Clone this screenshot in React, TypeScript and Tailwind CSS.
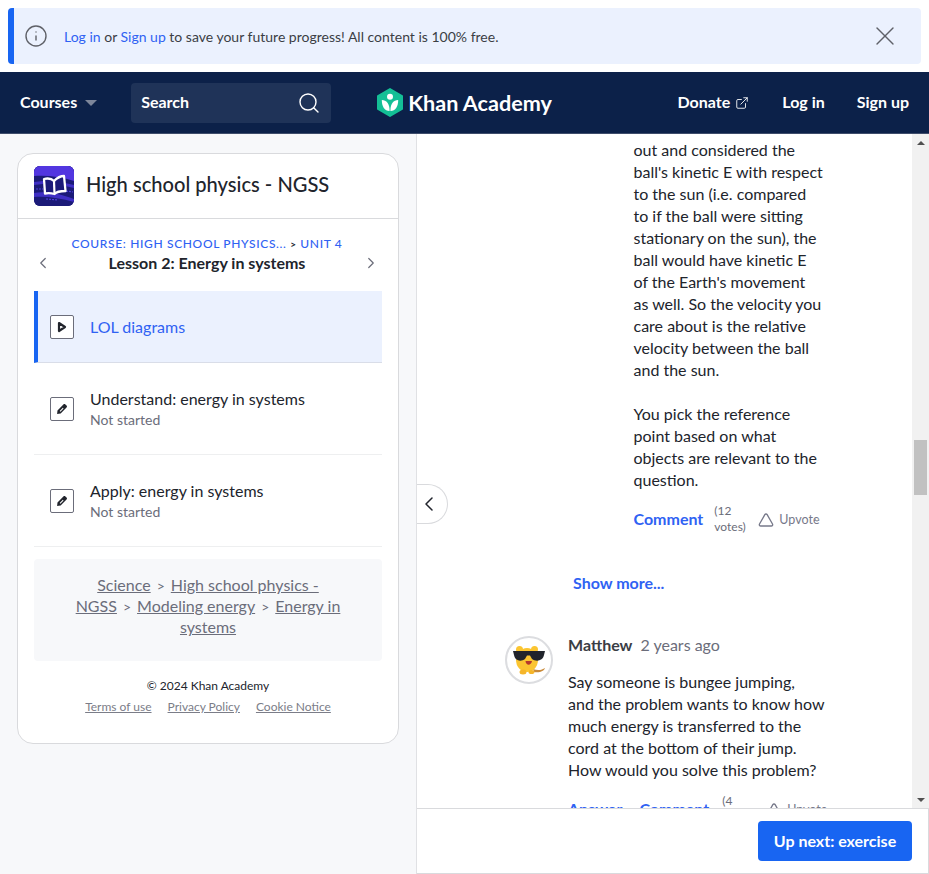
import React from 'react';
import { ChevronLeft, ChevronRight, Search, X, Info, ExternalLink, Triangle } from 'lucide-react';

const KhanLogo = () => (
  <svg width="26" height="29" viewBox="0 0 26 29">
    <path d="M13 1 L25 8 L25 21 L13 28 L1 21 L1 8 Z" fill="#14bf96" stroke="#14bf96" strokeLinejoin="round" strokeWidth="2" />
    <circle cx="13" cy="8.8" r="3" fill="#fff" />
    <path d="M4.8 12 C9.5 12 12.6 15.5 12.6 23 C7.5 23 4.8 18.5 4.8 12 Z" fill="#fff" />
    <path d="M21.2 12 C16.5 12 13.4 15.5 13.4 23 C18.5 23 21.2 18.5 21.2 12 Z" fill="#fff" />
  </svg>
);

const CourseIcon = () => (
  <div className="w-10 h-10 rounded-md bg-[#1b1a78] overflow-hidden shrink-0">
    <svg width="40" height="40" viewBox="0 0 40 40">
      <rect width="40" height="40" fill="#1b1a78" />
      <path d="M0 0 L40 0 L40 15 C28 11 14 9 0 10 Z" fill="#5236e0" />
      <path d="M0 16 L9 15 L9 18 L0 19 Z M31 17 L40 19 L40 22 L31 20 Z" fill="#3f2fc4" />
      <path d="M0 27 C12 25 26 28 40 33 L40 36 C26 32 12 30 0 31 Z" fill="#3f2fc4" />
      <path d="M2 23 L9 23 M32 25 L39 26 M12 33 L24 34" stroke="#4e3fdc" strokeWidth="1.2" strokeDasharray="2 1" />
      <path d="M10 13 C14 12 17 12 20 15 C23 12 26 10 30 10 L31.5 25 C27 25 23 25 20.5 28 C17 27 14 27 11 27.5 Z" fill="#1b1a78" stroke="#fff" strokeWidth="2.3" strokeLinejoin="round" />
      <path d="M20 15 L20.5 28" stroke="#fff" strokeWidth="2.2" />
    </svg>
  </div>
);

const PlayIcon = () => (
  <div className="w-6 h-6 rounded-[2px] border border-[#6b6d7a] flex items-center justify-center shrink-0 bg-white">
    <svg width="10" height="12" viewBox="0 0 10 12">
      <path d="M2 2 L8 6 L2 10 Z" fill="#fff" stroke="#21242c" strokeWidth="2.2" strokeLinejoin="round" />
    </svg>
  </div>
);

const PencilIcon = () => (
  <div className="w-6 h-6 rounded-[2px] border border-[#6b6d7a] flex items-center justify-center shrink-0 bg-white">
    <svg width="12" height="12" viewBox="0 0 13 13">
      <path d="M1.2 12 L1.6 8.2 L8 1.6 C8.7 0.9 9.5 0.9 10.2 1.6 L11.4 2.8 C12.1 3.5 12.1 4.3 11.4 5 L5 11.4 Z" fill="#21242c" />
      <path d="M4 8.6 L7.4 5.2 L8.2 6 L4.8 9.4 Z" fill="#fff" />
    </svg>
  </div>
);

const Avatar = () => (
  <div className="w-12 h-12 rounded-full border-2 border-[#dcdde0] bg-white flex items-center justify-center shrink-0">
    <svg width="34" height="30" viewBox="0 0 34 30">
      <path d="M21 24 C26 26 30 25 33 23 C32 26 28 28 22 27 Z" fill="#c98a3a" />
      <circle cx="7.5" cy="4.5" r="3.5" fill="#fbc531" />
      <circle cx="22.5" cy="4.5" r="3.5" fill="#fbc531" />
      <ellipse cx="15" cy="15" rx="11" ry="12" fill="#fbc531" />
      <ellipse cx="11" cy="27" rx="3.5" ry="2.5" fill="#f5b52a" />
      <ellipse cx="19.5" cy="27" rx="3" ry="2" fill="#f5b52a" />
      <path d="M1 6 L33 6 L32 10 C31 16 24 17 20 14 L18 10.5 L15 10.5 L13 14 C9 17 3 16 2 10 Z" fill="#21242c" />
      <path d="M13.5 16 C14 21 19 21 20 16 Z" fill="#b5392c" />
    </svg>
  </div>
);

const Topic = ({ icon, title, active, sub }: { icon: React.ReactNode; title: string; active?: boolean; sub?: string }) => (
  <div
    className={
      active
        ? 'h-[72px] flex items-center bg-[#ebf1fe] border-l-4 border-l-[#1865f2] pl-3 border-b border-b-[#d9dde8]'
        : 'h-[92px] flex items-center pl-4 border-b border-b-[#eeeff0]'
    }
  >
    {icon}
    <div className={active ? 'ml-4' : 'ml-4 pt-[2px]'}>
      <div className={`text-[16px] leading-[20px] ${active ? 'text-[#2f62f3]' : 'text-[#21242c]'}`}>{title}</div>
      {sub && <div className="text-[14px] leading-[20px] text-[#6b6d7a] mt-[1px]">{sub}</div>}
    </div>
  </div>
);

const Votes = ({ n, tw = 'ml-[11px]' }: { n: number; tw?: string }) => (
  <>
    <span className={`${tw} text-[12px] leading-[16px] text-[#6b6d7a] w-[34px] font-normal self-center`}>({n} votes)</span>
    <span className="ml-[10px] mt-[2px] flex items-center text-[12.5px] font-normal text-[#77798a]">
      <Triangle size={16} strokeWidth={2} />
      <span className="ml-[5px]">Upvote</span>
      <svg className="-ml-[6px]" width="6" height="5" viewBox="0 0 6 5">
        <path d="M1 1 L3 3.5 L5 1" fill="none" stroke="#a9abb3" strokeWidth="1" />
      </svg>
    </span>
  </>
);

const lines = [
  'out and considered the',
  "ball's kinetic E with respect",
  'to the sun (i.e. compared',
  'to if the ball were sitting',
  'stationary on the sun), the',
  'ball would have kinetic E',
  "of the Earth's movement",
  'as well. So the velocity you',
  'care about is the relative',
  'velocity between the ball',
  'and the sun.',
];

const lines2 = ['You pick the reference', 'point based on what', 'objects are relevant to the', 'question.'];

const lines3 = [
  'Say someone is bungee jumping,',
  'and the problem wants to know how',
  'much energy is transferred to the',
  'cord at the bottom of their jump.',
  'How would you solve this problem?',
];

export default function App() {
  return (
    <div className="h-[874px] w-[929px] overflow-hidden bg-white flex flex-col font-['Lato','Noto_Sans',sans-serif] text-[#21242c]">
      {/* banner */}
      <div className="px-2 pt-2 pb-2 shrink-0">
        <div className="h-14 bg-[#ebf1fe] rounded-[4px] border-l-[6px] border-l-[#1865f2] flex items-center pl-[10px] pr-5">
          <Info size={24} strokeWidth={1.4} className="text-[#5f6168]" />
          <div className="ml-4 text-[14px] flex-1 text-[#3b3e45]">
            <span className="text-[#2f62f3]">Log in</span> or <span className="text-[#2f62f3]">Sign up</span> to save your future progress! All content is 100% free.
          </div>
          <X size={32} strokeWidth={1} className="text-[#5f6168]" />
        </div>
      </div>

      {/* nav */}
      <div className="h-[61px] shrink-0 bg-[#0c2149] flex items-center pl-5 pr-5 text-white font-bold text-[16px]">
        <span className="mb-[2px]">Courses</span>
        <span className="ml-2 w-0 h-0 border-x-[6px] border-x-transparent border-t-[6px] border-t-[#7d869a]" />
        <div className="ml-[34px] w-[200px] h-10 rounded-[4px] bg-[#1f3358] flex items-center justify-between pl-[10px] pr-[10px]">
          <span className="mb-[2px]">Search</span>
          <Search size={24} strokeWidth={1.4} className="text-white" />
        </div>
        <div className="flex-1 flex items-center pl-[46px]">
          <KhanLogo />
          <span className="ml-[5px] text-[21.6px] font-bold mt-[1px]">Khan Academy</span>
        </div>
        <div className="flex items-center">
          <span className="mb-[2px]">Donate</span>
          <ExternalLink size={14} strokeWidth={1.5} className="ml-[5px]" />
        </div>
        <span className="ml-[33px] mb-[2px]">Log in</span>
        <span className="ml-[32px] mb-[2px]">Sign up</span>
      </div>

      <div className="flex-1 min-h-0 flex border-t border-t-[#3f4d6b]">
        {/* sidebar */}
        <div className="w-[417px] shrink-0 bg-[#f7f8fa] pl-[17px] pr-[17px] pt-[19px] border-r border-r-[#e0e1e4]">
          <div className="bg-white rounded-[16px] border border-[#d9dadd] pb-[27px]">
            <div className="h-[65px] flex items-center pl-4 border-b border-b-[#d9dadd]">
              <CourseIcon />
              <span className="ml-[12px] -mt-[4px] text-[20.1px] font-medium">High school physics - NGSS</span>
            </div>
            <div className="px-4 pt-[15px]">
              <div className="flex items-center justify-between h-[40px] mb-[17px]">
                <ChevronLeft size={18} strokeWidth={1.6} className="text-[#6b6d7a] mt-[17px]" />
                <div className="text-center">
                  <div className="text-[12px] leading-[18px] tracking-[0.65px] font-medium text-[#2f62f3]">
                    COURSE: HIGH SCHOOL PHYSICS... <span className="text-[#21242c] font-bold text-[10px]">&gt;</span> UNIT 4
                  </div>
                  <div className="text-[16px] leading-[20px] font-bold">Lesson 2: Energy in systems</div>
                </div>
                <ChevronRight size={18} strokeWidth={1.6} className="text-[#6b6d7a] mt-[17px] mr-[2px]" />
              </div>
              <Topic active icon={<PlayIcon />} title="LOL diagrams" />
              <Topic icon={<PencilIcon />} title="Understand: energy in systems" sub="Not started" />
              <Topic icon={<PencilIcon />} title="Apply: energy in systems" sub="Not started" />
              <div className="mt-3 h-[102px] rounded-[4px] bg-[#f7f8fa] px-6 pt-[15px] text-center text-[16px] leading-[21px] text-[#6b6d7a]">
                <span className="underline">Science</span>
                <span className="mx-[6px] text-[14px] leading-none">&gt;</span>
                <span className="underline">High school physics - NGSS</span>
                <span className="mx-[6px] text-[14px] leading-none">&gt;</span>
                <span className="underline">Modeling energy</span>
                <span className="mx-[6px] text-[14px] leading-none">&gt;</span>
                <span className="underline">Energy in systems</span>
              </div>
              <div className="mt-[16px] text-center text-[12px] leading-[18px] text-[#21242c]">© 2024 Khan Academy</div>
              <div className="mt-[3px] flex justify-center gap-4 text-[12px] leading-[18px] text-[#7b7d88] underline">
                <span>Terms of use</span>
                <span>Privacy Policy</span>
                <span>Cookie Notice</span>
              </div>
            </div>
          </div>
        </div>

        {/* main */}
        <div className="flex-1 min-w-0 flex flex-col relative">
          <div className="flex-1 min-h-0 flex overflow-hidden">
            <div className="flex-1 min-w-0 overflow-hidden pt-[5px]">
              <div className="pl-[216.5px] text-[16px] leading-[22px]">
                {lines.map((l) => (
                  <div key={l} className="whitespace-nowrap">{l}</div>
                ))}
                <div className="h-[22px]" />
                {lines2.map((l) => (
                  <div key={l} className="whitespace-nowrap">{l}</div>
                ))}
                <div className="mt-[9px] flex items-center h-[38px]">
                  <span className="font-bold text-[#2f62f3]">Comment</span>
                  <Votes n={12} />
                </div>
              </div>
              <div className="pl-[156px] mt-[34px] text-[16px] leading-[22px] font-bold text-[#2f62f3]">Show more...</div>
              <div className="pl-[88px] mt-[42px] flex">
                <Avatar />
                <div className="ml-[15px] -mt-[1px]">
                  <div className="h-[20px] flex items-center">
                    <span className="font-bold text-[16px] text-[#3a3d45]">Matthew</span>
                    <span className="ml-[8px] text-[16px] text-[#6b6d7a]">2 years ago</span>
                  </div>
                  <div className="mt-[16px] text-[16px] leading-[22px]">
                    {lines3.map((l) => (
                      <div key={l} className="whitespace-nowrap">{l}</div>
                    ))}
                  </div>
                  <div className="mt-[9px] flex items-center h-[38px] font-bold text-[#2f62f3]">
                    <span>Answer</span>
                    <span className="ml-[7px] mr-[7px] w-[3px] h-[3px] rounded-full bg-[#6b6d7a]" />
                    <span>Comment</span>
                    <Votes n={4} tw="ml-[13px]" />
                  </div>
                </div>
              </div>
            </div>
            {/* scrollbar */}
            <div className="w-[17px] shrink-0 bg-[#f1f1f1] flex flex-col items-center">
              <div className="h-[17px] flex items-center justify-center">
                <span className="w-0 h-0 border-x-[4px] border-x-transparent border-b-[4px] border-b-[#505050]" />
              </div>
              <div className="mt-[289px] w-[13px] h-[55px] bg-[#c1c1c1]" />
              <div className="flex-1" />
              <div className="h-[17px] flex items-center justify-center">
                <span className="w-0 h-0 border-x-[4px] border-x-transparent border-t-[4px] border-t-[#505050]" />
              </div>
            </div>
          </div>
          {/* footer */}
          <div className="h-[66px] shrink-0 border-t border-b border-r border-[#d9dadd] bg-white flex items-center justify-end pr-4">
            <div className="h-10 w-[154px] bg-[#1865f2] rounded-[4px] text-white font-bold text-[16px] flex items-center justify-center">Up next: exercise</div>
          </div>
          {/* collapse */}
          <div className="absolute left-0 top-[350px] w-[31px] h-10 bg-white border border-l-0 border-[#d9dadd] rounded-r-[20px] flex items-center">
            <ChevronLeft size={24} strokeWidth={1.5} className="text-[#21242c]" />
          </div>
        </div>
      </div>
    </div>
  );
}
